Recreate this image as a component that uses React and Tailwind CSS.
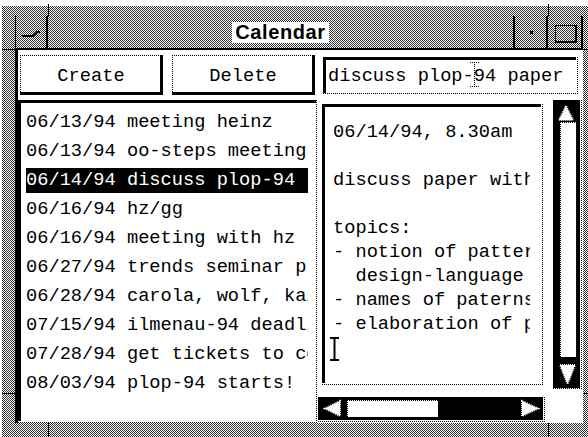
import React from "react";

// 1-bit stipple fills: sparse dots (1 of 4 pixels) and a softened checkerboard
const DOTS =
  "[background-image:linear-gradient(#0000_50%,#fff_50%),linear-gradient(90deg,#000_50%,#fff_50%)] [background-size:2px_2px]";
const CHECK =
  "[background-image:linear-gradient(#ffffff30,#ffffff30),linear-gradient(#000_50%,#fff_50%),linear-gradient(90deg,#000_50%,#fff_50%)] [background-size:2px_2px] [background-blend-mode:normal,difference,normal]";

const entries = [
  "06/13/94 meeting heinz",
  "06/13/94 oo-steps meeting",
  "06/14/94 discuss plop-94",
  "06/16/94 hz/gg",
  "06/16/94 meeting with hz",
  "06/27/94 trends seminar preparation",
  "06/28/94 carola, wolf, kai",
  "07/15/94 ilmenau-94 deadline",
  "07/28/94 get tickets to copenhagen",
  "08/03/94 plop-94 starts!",
];

const note = [
  "06/14/94, 8.30am",
  "",
  "discuss paper with heinz",
  "",
  "topics:",
  "- notion of patterns",
  "  design-language",
  "- names of paterns",
  "- elaboration of patterns",
];

function Sunken({ className = "", innerClass = "", children }) {
  return (
    <div className={`${DOTS} pr-[2px] pb-[2px] ${className}`}>
      <div className={`w-full h-full bg-white border-t-[3px] border-l-[3px] border-black ${innerClass}`}>
        {children}
      </div>
    </div>
  );
}

function Button({ label, className = "" }) {
  return (
    <div className={`bg-black pr-[3px] pb-[3px] ${className}`}>
      <div className={`${DOTS} w-full h-full pt-[2px] pl-[2px]`}>
        <div className="w-full h-full bg-white flex items-center justify-center pt-[3px] leading-[25px]">
          {label}
        </div>
      </div>
    </div>
  );
}

function Arrow({ w, h, points }) {
  return (
    <svg width={w} height={h} className="block shrink-0">
      <polygon points={points} fill="#fff" stroke="#fff" strokeWidth="2" strokeDasharray="1 1" />
    </svg>
  );
}

function Tick({ className }) {
  return <div className={`absolute bg-black ${className}`} />;
}

export default function App() {
  return (
    <div className="relative w-[588px] h-[437px] overflow-hidden bg-white text-black font-['Liberation_Mono',monospace] text-[18.7px]">
      <div className={`${CHECK} ml-[2px] mt-[6px] w-[586px] h-[431px] pt-[10px] pl-[13px] pr-[5px] pb-[14px] flex flex-col`}>
        {/* title bar */}
        <div className="h-[34px] flex border-b-2 border-black shrink-0">
          <div className="w-[33px] border-r-2 border-l border-black flex items-center justify-center">
            <svg width="20" height="10" className="block mt-[4px]">
              <polyline points="1,7 12,7 16,3 19,3" fill="none" stroke="#000" strokeWidth="2" />
            </svg>
          </div>
          <div className="w-[467px] border-r-2 border-black flex items-center justify-center">
            <span className="bg-white px-[3px] leading-[21px] font-['Liberation_Sans',Arial,sans-serif] font-bold text-[20px] tracking-[0.6px]">
              Calendar
            </span>
          </div>
          <div className="w-[33px] border-r-2 border-black flex items-center justify-center">
            <div className="w-[3px] h-[3px] bg-black ml-[2px]" />
          </div>
          <div className="w-[35px] border-r-2 border-black flex items-center justify-center">
            <div className="w-[22px] h-[18px] border-r-2 border-b-2 border-black ml-[3px] mt-[3px]">
              <div className="w-full h-full border-t border-l border-dotted border-black" />
            </div>
          </div>
        </div>

        {/* client area */}
        <div className="flex-1 bg-white border-l-[3px] border-black flex flex-col">
          <div className="h-[40px] mt-[5px] pl-[2px] flex shrink-0">
            <Button label="Create" className="w-[143px] h-[40px]" />
            <Button label="Delete" className="w-[143px] h-[40px] ml-[9px]" />
            <Sunken className="relative w-[255px] h-[38px] mt-[2px] ml-[8px]" innerClass="relative overflow-hidden">
              <div className="pl-[2px] leading-[33px] whitespace-pre">discuss plop-94 paper</div>
              <svg width="9" height="25" className="absolute left-[144px] top-[2px]">
                <path d="M0 0.5 H9 M4.5 0 V25 M0 24.5 H9" fill="none" stroke="#000" strokeWidth="1" strokeDasharray="1 1" />
              </svg>
            </Sunken>
          </div>

          <div className="mt-[5px] flex flex-1">
            {/* appointment list */}
            <Sunken className="w-[300px] h-[323px]" innerClass="pl-[5px] pt-[7px] pr-[8px] overflow-hidden">
              <div className="flex flex-col gap-[4px]">
                {entries.map((e, i) => (
                  <div
                    key={i}
                    className={`h-[25px] leading-[25px] whitespace-pre overflow-hidden ${i === 2 ? "bg-black text-white" : ""}`}
                  >
                    {e}
                  </div>
                ))}
              </div>
            </Sunken>

            <div className="w-[265px] flex flex-col">
              <div className="flex h-[290px]">
                {/* note text */}
                <Sunken className="w-[221px] h-[281px] ml-[4px] mt-[4px]" innerClass="relative">
                  <div className="ml-[8px] w-[197px] pt-[13px] overflow-hidden">
                    {note.map((l, i) => (
                      <div key={i} className="h-[24px] leading-[24px] whitespace-pre">
                        {l}
                      </div>
                    ))}
                  </div>
                  <svg width="9" height="24" className="absolute left-[5px] top-[230px]">
                    <path d="M0 1 H9 M4.5 1 V23 M0 23 H9" fill="none" stroke="#000" strokeWidth="2" />
                  </svg>
                </Sunken>

                {/* vertical scrollbar */}
                <div className={`${DOTS} ml-[10px] w-[29px] h-[290px] pr-[2px] pb-[2px]`}>
                  <div className="w-full h-full bg-black flex flex-col">
                    <Arrow w={27} h={22} points="13,6 6,20 20,20" />
                    <div className={`${DOTS} ml-[7px] w-[16px] h-[235px] pl-[2px] pt-[2px]`}>
                      <div className="w-full h-full bg-white" />
                    </div>
                    <Arrow w={27} h={31} points="7,8 22,8 14.5,27" />
                  </div>
                </div>
              </div>

              {/* horizontal scrollbar */}
              <div className={`${DOTS} mt-[7px] w-[227px] h-[25px] pr-[2px] pb-[2px]`}>
                <div className="w-full h-full bg-black flex items-center">
                  <Arrow w={27} h={23} points="7,11.5 22,4 22,19" />
                  <div className={`${DOTS} ml-[2px] w-[91px] h-[17px] pl-[2px] pt-[2px]`}>
                    <div className="w-full h-full bg-white" />
                  </div>
                  <div className="flex-1" />
                  <Arrow w={23} h={23} points="2,4 2,19 18,11.5" />
                </div>
              </div>
            </div>
          </div>
        </div>
      </div>

      {/* resize-handle marks on the frame */}
      <Tick className="left-[48px] top-[4px] w-[1px] h-[12px]" />
      <Tick className="left-[548px] top-[4px] w-[1px] h-[12px]" />
      <Tick className="left-[2px] top-[49px] w-[13px] h-[1px]" />
      <Tick className="left-[583px] top-[49px] w-[5px] h-[1px]" />
      <Tick className="left-[2px] top-[393px] w-[13px] h-[1px]" />
      <Tick className="left-[583px] top-[393px] w-[5px] h-[1px]" />
      <Tick className="left-[48px] top-[423px] w-[1px] h-[14px]" />
      <Tick className="left-[548px] top-[423px] w-[1px] h-[14px]" />
    </div>
  );
}
